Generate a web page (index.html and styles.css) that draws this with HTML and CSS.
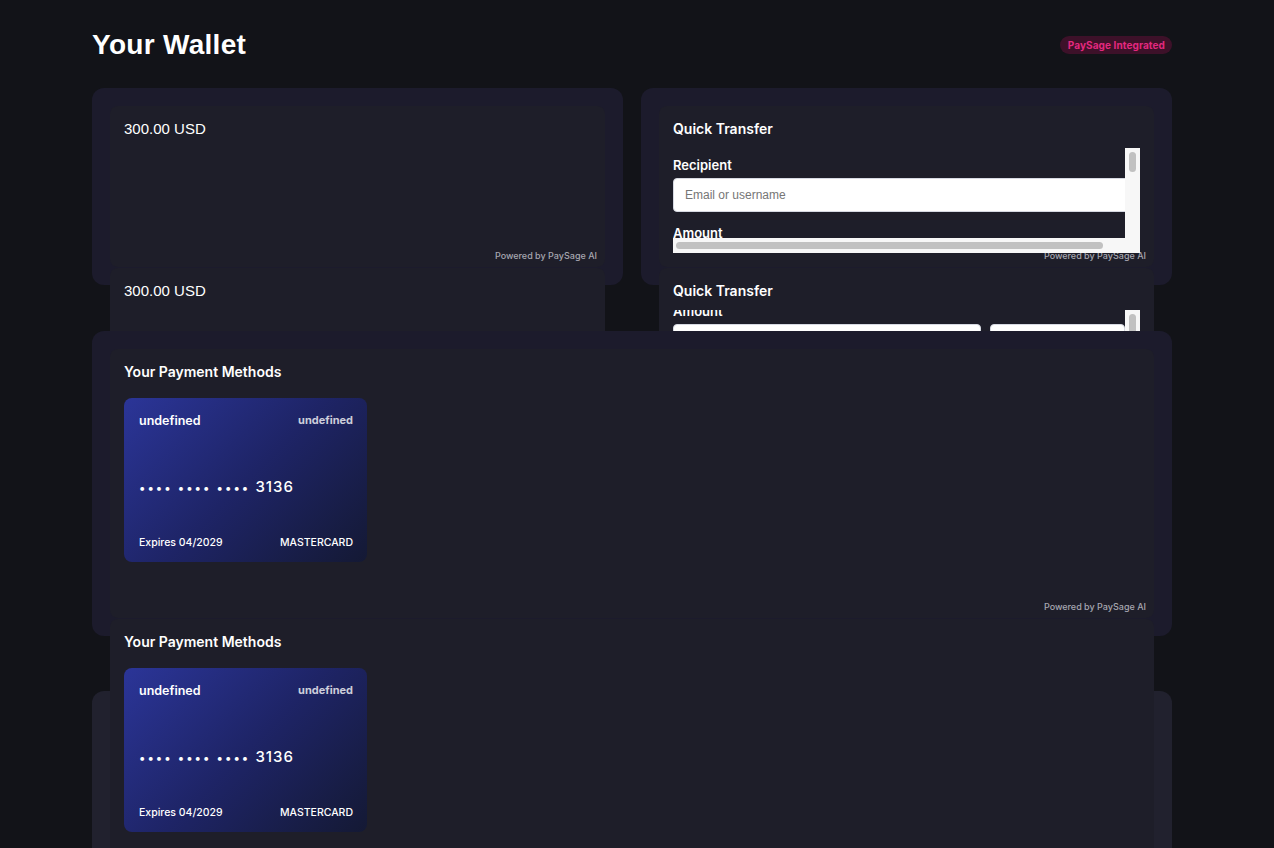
FILE: index.html
```html
<!DOCTYPE html>
<html lang="en">
<head>
<meta charset="utf-8">
<title>Your Wallet</title>
<link rel="stylesheet" href="styles.css">
</head>
<body>
<main class="page">
  <header class="page-head">
    <h1 class="page-title">Your Wallet</h1>
    <span class="badge">PaySage Integrated</span>
  </header>

  <div class="row">
    <section class="panel panel-top">
      <div class="widget widget-clip">
        <p class="balance">300.00 USD</p>
      </div>
      <div class="widget widget-dup">
        <p class="balance">300.00 USD</p>
      </div>
      <p class="powered">Powered by PaySage AI</p>
    </section>

    <section class="panel panel-top">
      <div class="widget widget-clip">
        <h2 class="widget-title">Quick Transfer</h2>
        <div class="scroller">
          <div class="viewport">
            <form class="form">
              <div class="group">
                <label class="field-label">Recipient</label>
                <input class="input input-wide" type="text" placeholder="Email or username">
              </div>
              <div class="group">
                <label class="field-label">Amount</label>
                <div class="amount-row">
                  <input class="input amount-input" type="text">
                  <input class="input currency" type="text">
                </div>
              </div>
            </form>
          </div>
          <div class="vbar"><span class="vthumb"></span></div>
          <div class="hbar"><span class="hthumb"></span></div>
          <div class="corner"></div>
        </div>
      </div>
      <div class="widget widget-dup">
        <h2 class="widget-title">Quick Transfer</h2>
        <div class="scroller">
          <div class="viewport">
            <form class="form form-scrolled">
              <div class="group">
                <label class="field-label">Recipient</label>
                <input class="input input-wide" type="text" placeholder="Email or username">
              </div>
              <div class="group">
                <label class="field-label">Amount</label>
                <div class="amount-row">
                  <input class="input amount-input" type="text">
                  <input class="input currency" type="text">
                </div>
              </div>
            </form>
          </div>
          <div class="vbar"><span class="vthumb"></span></div>
          <div class="hbar"><span class="hthumb"></span></div>
          <div class="corner"></div>
        </div>
      </div>
      <p class="powered">Powered by PaySage AI</p>
    </section>
  </div>

  <section class="panel panel-methods">
    <div class="widget widget-clip widget-clip-tall">
      <h2 class="widget-title widget-title-methods">Your Payment Methods</h2>
      <div class="pay-card">
        <div class="pc-top">
          <span class="pc-name">undefined</span>
          <span class="pc-type">undefined</span>
        </div>
        <div class="pc-number"><span class="pc-dots">•••• •••• •••• </span>3136</div>
        <div class="pc-bottom">
          <span>Expires 04/2029</span>
          <span>MASTERCARD</span>
        </div>
      </div>
    </div>
    <div class="widget widget-dup widget-dup-tall">
      <h2 class="widget-title widget-title-methods">Your Payment Methods</h2>
      <div class="pay-card">
        <div class="pc-top">
          <span class="pc-name">undefined</span>
          <span class="pc-type">undefined</span>
        </div>
        <div class="pc-number"><span class="pc-dots">•••• •••• •••• </span>3136</div>
        <div class="pc-bottom">
          <span>Expires 04/2029</span>
          <span>MASTERCARD</span>
        </div>
      </div>
    </div>
    <p class="powered">Powered by PaySage AI</p>
  </section>

  <section class="panel panel-next"></section>
</main>
</body>
</html>
```

FILE: styles.css
```css
* {
  box-sizing: border-box;
}

html,
body {
  margin: 0;
  padding: 0;
}

body {
  background: #121318;
  color: #ffffff;
  font-family: Inter, "Noto Sans", sans-serif;
}

.page {
  width: 1080px;
  margin-left: 92px;
  padding-top: 29px;
}

/* header */
.page-head {
  display: flex;
  justify-content: space-between;
  align-items: center;
  height: 32px;
  margin-bottom: 27px;
}

.page-title {
  margin: 0;
  font: 700 28px/32px "Liberation Sans", Arial, sans-serif;
  letter-spacing: 0.3px;
  color: #ffffff;
}

.badge {
  height: 18px;
  padding: 0 7px 0 8px;
  border-radius: 9px;
  background: #3d1129;
  color: #e3287f;
  font: 700 10px/18px Inter, sans-serif;
  letter-spacing: 0.1px;
}

/* panels */
.row {
  position: relative;
  z-index: 1;
  display: flex;
  gap: 18px;
  margin-bottom: 46px;
}

.panel {
  position: relative;
  background: #1c1b2c;
  border-radius: 12px;
  padding: 18px;
}

.panel-top {
  flex: 1;
  height: 197px;
}

.panel-methods {
  z-index: 2;
  height: 305px;
  margin-bottom: 55px;
}

.panel-next {
  z-index: 1;
  height: 320px;
  background: #21212e;
}

.widget {
  background: #1e1e29;
  border-radius: 8px;
  padding: 15px 14px;
  overflow: hidden;
}

.widget-clip {
  height: 161px;
}

.widget-clip-tall {
  height: 269px;
}

.widget-dup {
  margin-top: 1px;
  height: 240px;
}

.widget-dup-tall {
  height: 420px;
}

.powered {
  position: absolute;
  right: 26px;
  bottom: 24px;
  margin: 0;
  font: 500 9px/11px Inter, sans-serif;
  color: #a6a6b0;
}

.balance {
  margin: 0;
  font: 400 15px/16px "Liberation Sans", Arial, sans-serif;
  color: #ffffff;
}

.widget-title {
  margin: 0 0 11px;
  font: 600 14px/16px Inter, sans-serif;
  color: #ffffff;
}

.widget-title-methods {
  margin-bottom: 18px;
}

/* fake scroll box */
.scroller {
  position: relative;
  z-index: 1;
  display: grid;
  grid-template-columns: 452px 15px;
  grid-template-rows: 90px 15px;
}

.viewport {
  overflow: hidden;
}

.form {
  margin: 0;
  padding-top: 9px;
}

.form-scrolled {
  margin-top: -84px;
}

.group {
  margin-bottom: 13px;
}

.field-label {
  display: block;
  margin-bottom: 5px;
  font: 600 13px/16px Inter, sans-serif;
  color: #ffffff;
}

.input {
  display: block;
  height: 34px;
  margin: 0;
  padding: 0 11px;
  border: 1px solid #d6d9e2;
  border-radius: 4px;
  background: #ffffff;
  font: 400 12px "Liberation Sans", Arial, sans-serif;
  color: #222222;
  outline: none;
}

.input::placeholder {
  color: #767676;
}

.input-wide {
  width: 474px;
}

.amount-row {
  display: flex;
  gap: 9px;
}

.amount-input {
  width: 308px;
  flex: none;
}

.currency {
  width: 135px;
  flex: none;
}

.vbar {
  background: #f7f7f7;
  padding: 4px 0 0 4px;
}

.vthumb {
  display: block;
  width: 7px;
  height: 20px;
  border-radius: 4px;
  background: #c1c1c1;
}

.hbar {
  background: #f7f7f7;
  padding: 4px 0 0 3px;
}

.hthumb {
  display: block;
  width: 427px;
  height: 7px;
  border-radius: 4px;
  background: #c1c1c1;
}

.corner {
  background: #f7f7f7;
}

/* payment card */
.pay-card {
  width: 243px;
  height: 164px;
  border-radius: 8px;
  background: linear-gradient(135deg, #2b3598 0%, #1e2466 50%, #141934 100%);
  padding: 15px 14px 12px 15px;
  display: flex;
  flex-direction: column;
}

.pc-top {
  display: flex;
  justify-content: space-between;
  align-items: flex-start;
}

.pc-name {
  font: 600 12.5px/16px Inter, sans-serif;
  color: #ffffff;
}

.pc-type {
  font: 700 11px/14px Inter, sans-serif;
  color: rgba(255, 255, 255, 0.78);
}

.pc-number {
  margin-top: 49px;
  font: 500 15px/18px Inter, sans-serif;
  letter-spacing: 1px;
  color: #ffffff;
}

.pc-dots {
  font-size: 12px;
  letter-spacing: 2px;
}

.pc-bottom {
  margin-top: auto;
  display: flex;
  justify-content: space-between;
  font: 500 10.5px/14px Inter, sans-serif;
  color: #ffffff;
}
```
